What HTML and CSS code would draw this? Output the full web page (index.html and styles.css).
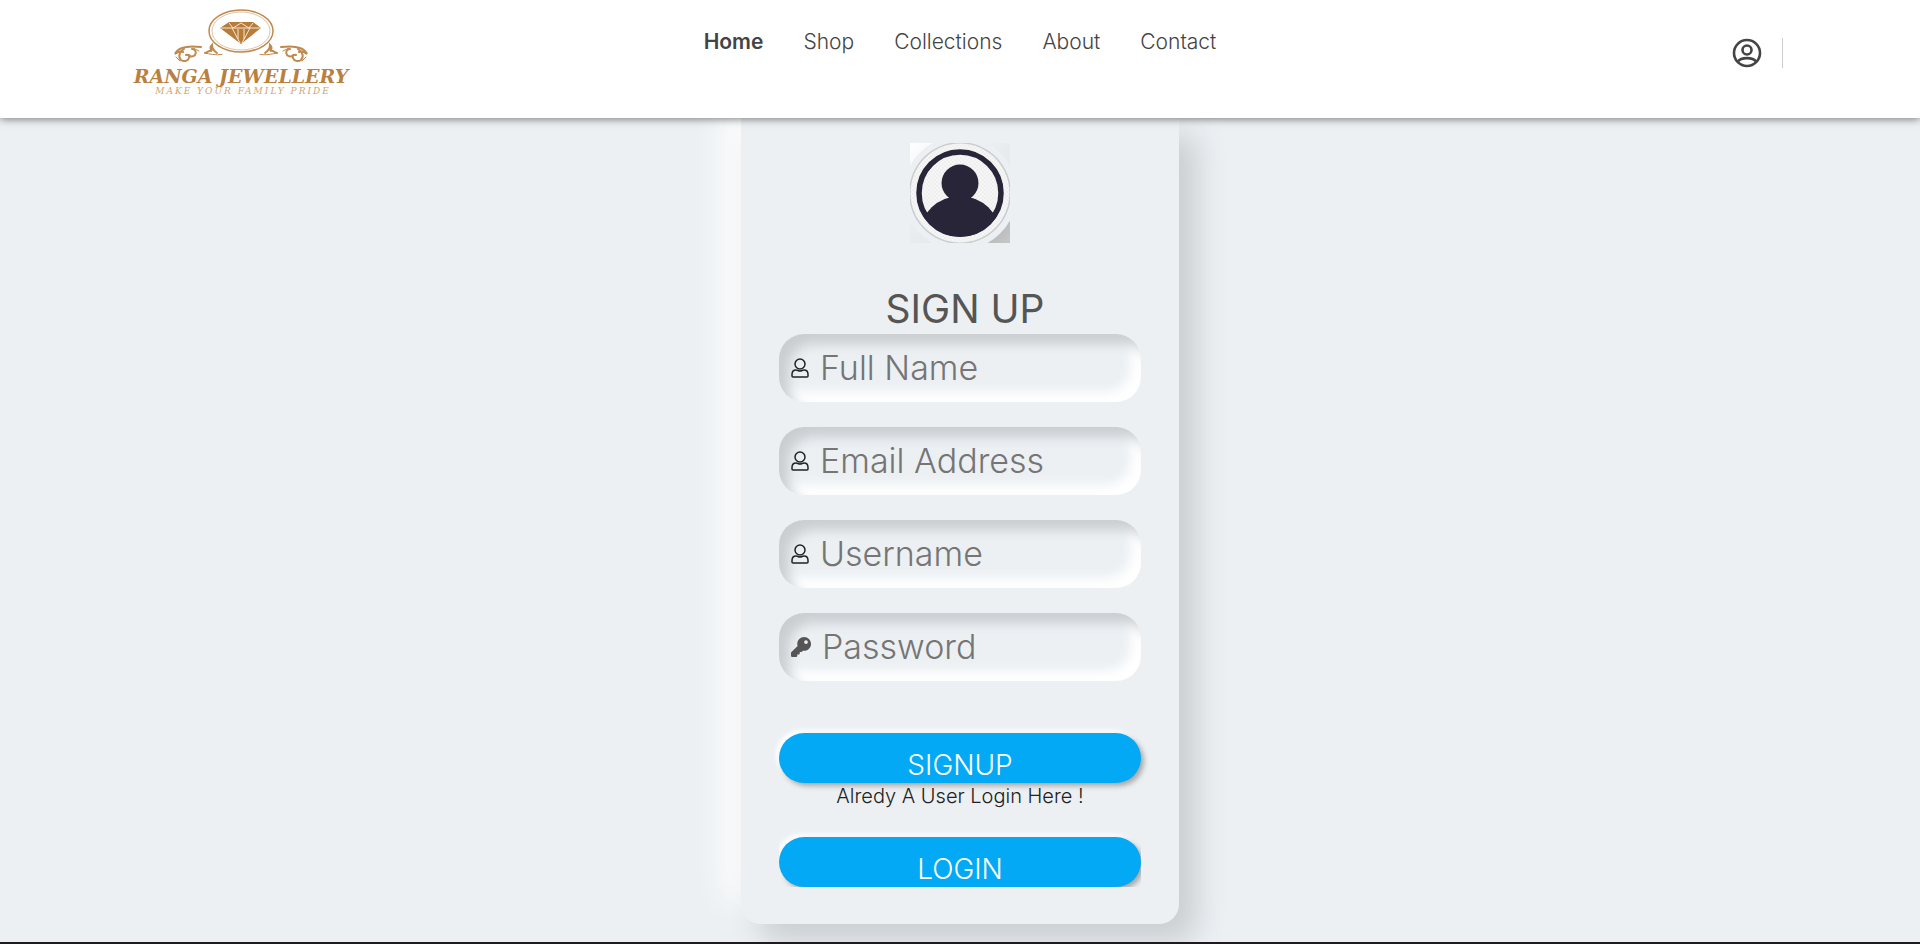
FILE: index.html
```
<!DOCTYPE html>
<html lang="en">
<head>
<meta charset="utf-8">
<meta name="viewport" content="width=device-width, initial-scale=1">
<title>Ranga Jewellery - Sign Up</title>
<link rel="stylesheet" href="styles.css">
</head>
<body>
<header class="header">
  <a class="logo" href="#" aria-label="Ranga Jewellery">
    <svg width="240" height="100" viewBox="120 0 240 100">
      <defs>
        <g id="swirl" fill="none" stroke="#c08a4e" stroke-linecap="round">
          <path d="M222 54.500C215 55.500 210 54 205 53" stroke-width="1"/>
          <path d="M205 53c3-1 4-3 7-2 -2-2-2-4 0-6 0 4 2 6 5 8" stroke-width="2"/>
          <path d="M201 47c-8-1-14-1-19 1-3 1-6 4-7 6 4-3 6-3 8-2" stroke-width="2"/>
          <path d="M184 49c-5 3-6 8-3 11 3 2 7 1 8-2 1-2-1-4-3-3M192 49c3 0 5 3 3 6-2 2-5 2-6 0" stroke-width="2"/>
          <path d="M176 57l4 4M193 48l6 3" stroke-width="1"/>
        </g>
      </defs>
      <g fill="none" stroke="#c08a4e">
        <ellipse cx="241" cy="31" rx="32" ry="21" stroke-width="1.500"/>
        <ellipse cx="241" cy="31" rx="29" ry="19" stroke-width="1" opacity=".5"/>
      </g>
      <path d="M229 22h24l8 6-20 16-21-16z" fill="#b87c3a"/>
      <path d="M221 28h39M229 23l4 5 8-5 8 5 4-5M232 28l8 15M250 28l-8 15M238 29v10M244 29v10" fill="none" stroke="#f7e6cf" stroke-width="1"/>
      <use href="#swirl"/>
      <use href="#swirl" transform="matrix(-1 0 0 1 482 0)"/>
      <text class="logo-name" x="241" y="83" text-anchor="middle">RANGA JEWELLERY</text>
      <text class="logo-tag" x="243" y="94" text-anchor="middle">MAKE YOUR FAMILY PRIDE</text>
    </svg>
  </a>
  <nav class="nav">
    <a class="active" href="#">Home</a>
    <a href="#">Shop</a>
    <a href="#">Collections</a>
    <a href="#">About</a>
    <a href="#">Contact</a>
  </nav>
  <div class="account">
    <a href="#" aria-label="Account">
      <svg width="30" height="30" viewBox="0 0 30 30" fill="none" stroke="#444" stroke-width="2.600">
        <circle cx="15" cy="15" r="13"/>
        <circle cx="15" cy="12" r="4.500"/>
        <path d="M6 23.500C9 19 21 19 24 23.500"/>
      </svg>
    </a>
  </div>
</header>
<main class="main">
  <form class="card">
    <div class="avatar">
      <svg width="100" height="100" viewBox="0 0 100 100">
        <defs>
          <clipPath id="disc"><circle cx="50" cy="51" r="43"/></clipPath>
          <linearGradient id="tile" x1="0" y1="0" x2="1" y2="1">
            <stop offset="0" stop-color="#fff"/><stop offset=".3" stop-color="#ecf0f3"/>
            <stop offset=".75" stop-color="#e4e7e9"/><stop offset=".9" stop-color="#bdbfbf"/><stop offset="1" stop-color="#c6c8c8"/>
          </linearGradient>
          <pattern id="check" width="4" height="4" patternUnits="userSpaceOnUse">
            <path d="M0 0h4v4H0z" fill="#f6f6f6"/><path d="M0 0h2v2H0zM2 2h2v2H2z" fill="#efefef"/>
          </pattern>
        </defs>
        <path d="M0 0h100v100H0z" fill="url(#tile)"/>
        <circle cx="50" cy="50" r="57" fill="#ecf0f3"/>
        <circle cx="50" cy="50" r="51" fill="#c9cccf"/>
        <circle cx="50" cy="50" r="49.500" fill="url(#check)"/>
        <g fill="#272537" clip-path="url(#disc)">
          <circle cx="50" cy="40" r="18.500"/>
          <path d="M39 52h22v6H39z"/>
          <ellipse cx="50" cy="91" rx="40" ry="38"/>
        </g>
        <circle cx="50" cy="50" r="41" fill="none" stroke="#272537" stroke-width="5.500"/>
      </svg>
    </div>
    <h1 class="title">SIGN UP</h1>
    <div class="field">
      <label for="fullname" aria-label="Full Name"><svg class="ico-user" width="18" height="20" viewBox="0 0 18 20"><circle cx="9" cy="6" r="5"/><path d="M5 12C2.500 12 1 14 1 16.500V18c0 .7.500 1 1 1h14c.500 0 1-.3 1-1v-1.500C17 14 15.500 12 13 12c-2 0-2 1-4 1s-2-1-4-1z"/></svg></label>
      <input id="fullname" type="text" placeholder="Full Name">
    </div>
    <div class="field">
      <label for="email" aria-label="Email Address"><svg class="ico-user" width="18" height="20" viewBox="0 0 18 20"><circle cx="9" cy="6" r="5"/><path d="M5 12C2.500 12 1 14 1 16.500V18c0 .7.500 1 1 1h14c.500 0 1-.3 1-1v-1.500C17 14 15.500 12 13 12c-2 0-2 1-4 1s-2-1-4-1z"/></svg></label>
      <input id="email" type="email" placeholder="Email Address">
    </div>
    <div class="field">
      <label for="username" aria-label="Username"><svg class="ico-user" width="18" height="20" viewBox="0 0 18 20"><circle cx="9" cy="6" r="5"/><path d="M5 12C2.500 12 1 14 1 16.500V18c0 .7.500 1 1 1h14c.500 0 1-.3 1-1v-1.500C17 14 15.500 12 13 12c-2 0-2 1-4 1s-2-1-4-1z"/></svg></label>
      <input id="username" type="text" placeholder="Username">
    </div>
    <div class="field">
      <label for="password" aria-label="Password"><svg width="20" height="20" viewBox="0 0 512 512" fill="#555"><path d="M512 176c0 97.200-78.800 176-176 176-11.200 0-22.200-1.100-32.800-3.100l-24 27A24 24 0 0 1 261.200 384H224v40c0 13.300-10.700 24-24 24h-40v40c0 13.300-10.700 24-24 24H24c-13.300 0-24-10.700-24-24v-78.100c0-6.400 2.500-12.500 7-17l161.800-161.800A176 176 0 0 1 160 176C160 78.800 238.800 0 336 0s176 78.500 176 176zM336 128a48 48 0 1 0 96 0 48 48 0 1 0-96 0z"/></svg></label>
      <input id="password" type="password" placeholder="Password">
    </div>
    <button class="btn btn-signup" type="submit">SIGNUP</button>
    <p class="hint">Alredy A User Login Here !</p>
    <div class="clip"><button class="btn" type="button">LOGIN</button></div>
  </form>
</main>
<footer class="footer"></footer>
</body>
</html>
```
FILE: styles.css
```
* {
  box-sizing: border-box;
}

body {
  display: flex;
  flex-direction: column;
  min-height: 100vh;
  margin: 0;
  background: #ecf0f3;
  font-family: Inter, "Open Sans", sans-serif;
  font-weight: 300;
  color: #222;
}

svg {
  display: block;
}

.header {
  position: sticky;
  top: 0;
  z-index: 2;
  display: grid;
  grid-template-columns: 1fr auto 1fr;
  align-items: start;
  padding: 0 120px 18px;
  background: #fff;
  box-shadow: 0 1px 8px rgba(0, 0, 0, 0.5);
}

.logo {
  justify-self: start;
}

.logo-name {
  fill: #b9803f;
  font: italic bold 19px "DejaVu Serif", serif;
}

.logo-tag {
  fill: #cda574;
  font: italic 9px "DejaVu Serif", serif;
  letter-spacing: 2px;
}

.nav {
  display: flex;
  gap: 40px;
  padding-top: 27px;
}

.nav a {
  color: #444;
  font-size: 21px;
  line-height: 30px;
  text-decoration: none;
}

.nav .active {
  font-weight: 600;
}

.account {
  justify-self: end;
  margin: 38px 17px 0 0;
  padding-right: 20px;
  border-right: 1px solid #ccc;
}

.main {
  display: flex;
  justify-content: center;
  padding-bottom: 18px;
  overflow: hidden;
}

.card {
  width: 438px;
  padding: 25px 38px 37px;
  border-radius: 0 0 20px 20px;
  background: #ecf0f3;
  box-shadow: 18px 18px 30px #cbced1, -20px -20px 30px #fcfcfc;
}

.avatar {
  display: flex;
  justify-content: center;
}

.title {
  margin: 41px 0 0;
  padding-left: 10px;
  color: #555;
  font-size: 39px;
  font-weight: 400;
  line-height: 50px;
  text-align: center;
}

.field {
  display: flex;
  align-items: center;
  gap: 11px;
  height: 68px;
  margin-bottom: 25px;
  padding: 0 12px;
  border-radius: 25px;
  box-shadow: inset 10px 10px 12px #cbced1, inset -10px -10px 12px #fff;
}

.field input {
  flex: 1;
  min-width: 0;
  padding: 0;
  border: 0;
  outline: 0;
  background: none;
  color: #555;
  font: inherit;
  font-size: 34px;
  line-height: 48px;
}

.field input::placeholder {
  color: #757575;
  opacity: 1;
}

.ico-user {
  fill: none;
  stroke: #222;
  stroke-width: 1.5;
}

.btn {
  display: block;
  width: 100%;
  height: 50px;
  padding: 14px 0 0;
  border: 0;
  border-radius: 25px;
  background: #03a9f4;
  box-shadow: 3px 3px 5px #a8a8a8, -3px -3px 5px #fff;
  color: #fff;
  font: inherit;
  font-size: 28px;
  line-height: 34px;
  text-align: center;
}

.btn-signup {
  margin-top: 52px;
}

.hint {
  margin: 0 0 20px;
  font-size: 20px;
  line-height: 26px;
  text-align: center;
}

.clip {
  padding-top: 8px;
  overflow: hidden;
}

.footer {
  flex: 1;
  min-height: 2px;
  background: #1d1a20;
}
```
